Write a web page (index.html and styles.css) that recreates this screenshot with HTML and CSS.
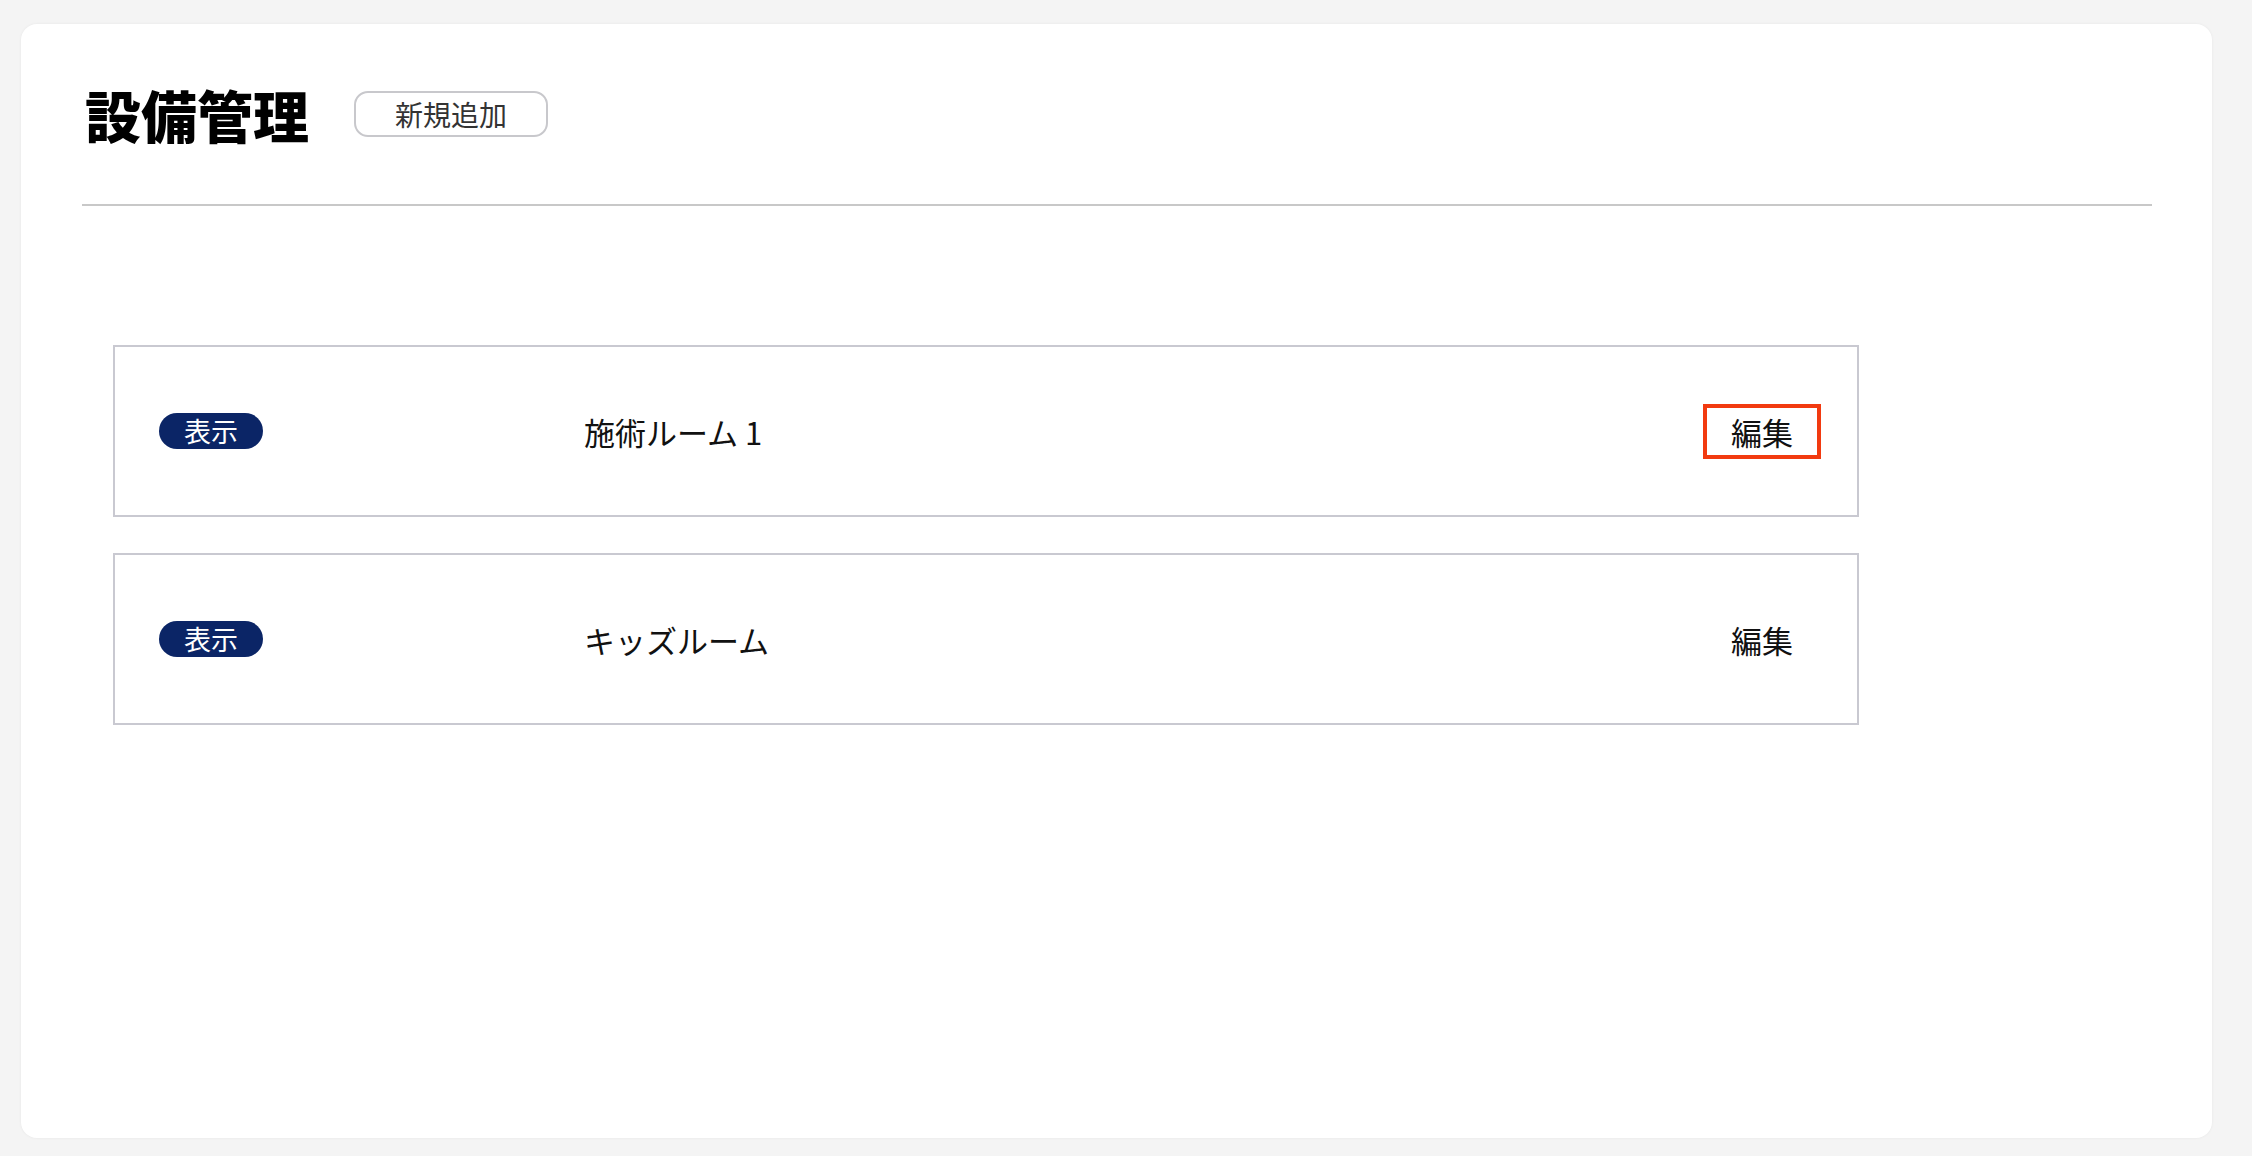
FILE: index.html
```html
<!DOCTYPE html>
<html lang="ja">
<head>
  <meta charset="UTF-8" />
  <meta name="viewport" content="width=device-width, initial-scale=1" />
  <title>設備管理</title>
  <link rel="stylesheet" href="styles.css">
</head>
<body>
  <div class="panel">
    <div class="page-head">
      <h1>設備管理</h1>
      <button class="add-btn" type="button">新規追加</button>
    </div>

    <ul class="room-list">
      <li class="room">
        <span class="badge">表示</span>
        <span class="room-name">施術ルーム 1</span>
        <a class="edit-link is-focused" href="#">編集</a>
      </li>
      <li class="room">
        <span class="badge">表示</span>
        <span class="room-name">キッズルーム</span>
        <a class="edit-link" href="#">編集</a>
      </li>
    </ul>
  </div>
</body>
</html>
```

FILE: styles.css
```css
html, body {
  height: 100%;
}
body {
  margin: 0;
  padding: 24px 40px 18px 21px;
  box-sizing: border-box;
  background-color: #f4f4f4;
  font-family: 'Noto Sans CJK JP', 'Noto Sans', sans-serif;
  color: #111;
}
.panel {
  height: 100%;
  box-sizing: border-box;
  background-color: #fff;
  border-radius: 16px;
  box-shadow: 0 0 3px rgba(0, 0, 0, 0.06);
  padding: 56px 60px 0 61px;
}
.page-head {
  display: flex;
  align-items: center;
  padding-bottom: 57px;
  border-bottom: 2px solid #c8c8c8;
}
.page-head h1 {
  margin: 0 0 0 3px;
  font-size: 56px;
  line-height: 1.2;
  font-weight: 900;
  color: #000;
}
.add-btn {
  margin-left: 45px;
  padding: 7px 39px;
  font-family: inherit;
  font-size: 28px;
  line-height: 1;
  color: #333;
  background-color: #fff;
  border: 2px solid #c8c8cc;
  border-radius: 14px;
  cursor: pointer;
}

.room-list {
  list-style: none;
  margin: 139px 0 0 31px;
  padding: 0;
  width: 1746px;
  display: flex;
  flex-direction: column;
  gap: 36px;
}
.room {
  height: 172px;
  box-sizing: border-box;
  border: 2px solid #c9c9d1;
  display: grid;
  grid-template-columns: 425px 1fr auto;
  align-items: center;
  padding: 0 40px 0 44px;
}
.badge {
  justify-self: start;
  padding: 0 25px;
  font-size: 27px;
  line-height: 36px;
  color: #fff;
  background-color: #0b2566;
  border-radius: 18px;
}
.room-name {
  font-size: 31px;
  line-height: 1.2;
}
.edit-link {
  display: inline-block;
  padding: 5px 24px;
  font-size: 31px;
  line-height: 1.2;
  color: #111;
  text-decoration: none;
}
.edit-link.is-focused {
  outline: 4px solid #f23a10;
}
```
